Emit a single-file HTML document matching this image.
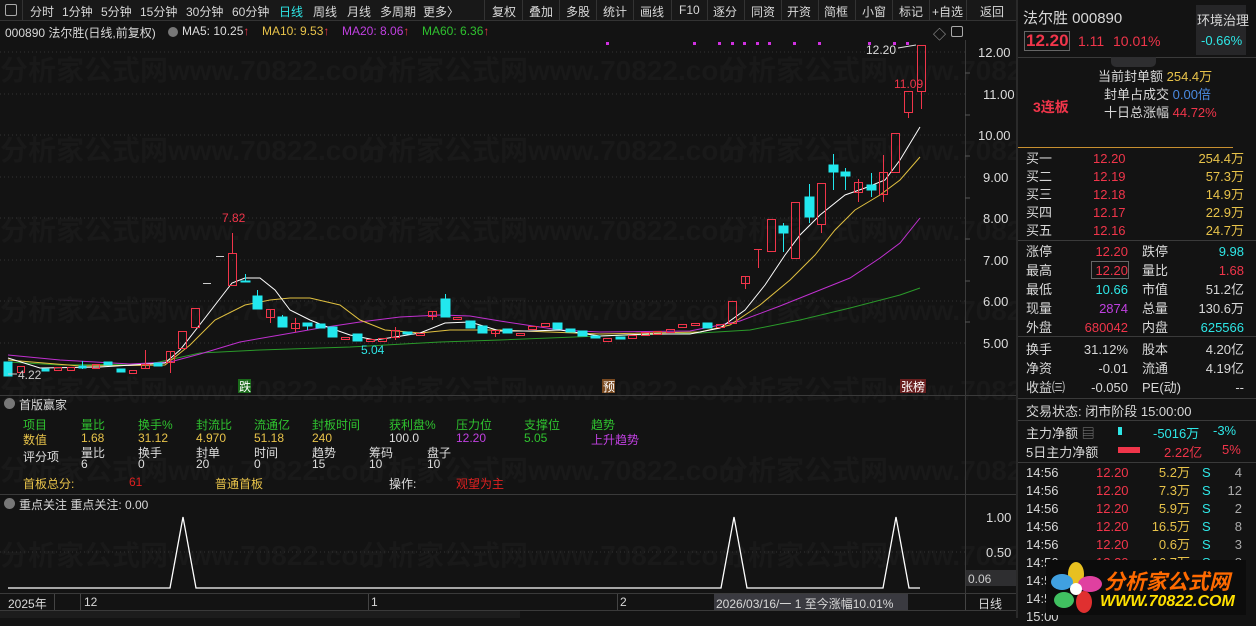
<!DOCTYPE html>
<html><head><meta charset="utf-8"><style>
*{margin:0;padding:0;box-sizing:border-box}
body{width:1256px;height:618px;background:#131313;overflow:hidden;position:relative;font-family:"Liberation Sans","Noto Sans CJK SC",sans-serif;font-size:12px;color:#d8d8d8}
.a{position:absolute;white-space:nowrap}
.tb span{position:absolute;top:3px;font-size:12px;color:#d8d8d8}
.sep{position:absolute;top:0;width:1px;height:20px;background:#333}
.r{color:#f0354a}.y{color:#e8c34a}.c{color:#2ee6e6}.g{color:#2fc22f}.m{color:#c040e0}.w{color:#dedede}.gy{color:#aaa}
.rp{font-size:13px}
.hl{position:absolute;height:1px;background:#3a3a3a}
</style></head><body>
<div class="a" style="left:0;top:0;width:1016px;height:21px;background:#181818;border-bottom:1px solid #333"></div>
<div class="tb">
<span style="left:5px;top:4px;width:12px;height:12px;border:1px solid #aaa;border-radius:2px"></span>
<span style="left:30px">分时</span><span style="left:62px">1分钟</span><span style="left:101px">5分钟</span><span style="left:140px">15分钟</span><span style="left:186px">30分钟</span><span style="left:232px">60分钟</span><span style="left:279px;color:#2ee6e6">日线</span><span style="left:313px">周线</span><span style="left:347px">月线</span><span style="left:380px">多周期</span><span style="left:423px">更多〉</span>
<span style="left:492px">复权</span><span style="left:529px">叠加</span><span style="left:566px">多股</span><span style="left:603px">统计</span><span style="left:640px">画线</span><span style="left:679px">F10</span><span style="left:713px">逐分</span><span style="left:751px">同资</span><span style="left:787px">开资</span><span style="left:824px">简框</span><span style="left:862px">小窗</span><span style="left:899px">标记</span><span style="left:932px">+自选</span><span style="left:980px">返回</span>
</div>
<div class="sep" style="left:22px"></div><div class="sep" style="left:484px"></div><div class="sep" style="left:522px"></div><div class="sep" style="left:559px"></div><div class="sep" style="left:596px"></div><div class="sep" style="left:633px"></div><div class="sep" style="left:671px"></div><div class="sep" style="left:707px"></div><div class="sep" style="left:744px"></div><div class="sep" style="left:781px"></div><div class="sep" style="left:818px"></div><div class="sep" style="left:855px"></div><div class="sep" style="left:892px"></div><div class="sep" style="left:929px"></div><div class="sep" style="left:966px"></div>
<div class="a" style="left:5px;top:24px;font-size:12px">000890 法尔胜(日线,前复权)</div>
<div class="a" style="left:168px;top:27px;width:10px;height:10px;border-radius:50%;background:#777"></div>
<div class="a w" style="left:182px;top:24px">MA5: 10.25<span class="r">↑</span></div>
<div class="a y" style="left:262px;top:24px">MA10: 9.53<span class="r">↑</span></div>
<div class="a m" style="left:342px;top:24px">MA20: 8.06<span class="r">↑</span></div>
<div class="a g" style="left:422px;top:24px">MA60: 6.36<span class="r">↑</span></div>
<div class="a gy" style="left:933px;top:24px;font-size:13px">◇</div>
<div class="a" style="left:951px;top:26px;width:12px;height:11px;border:1px solid #aaa;border-radius:2px"></div>

<svg class="a" style="left:0;top:0" width="1016" height="618">
<g fill="#191919" font-size="28" font-family="Liberation Sans,Noto Sans CJK SC,sans-serif" font-weight="bold">
<text x="0" y="80">分析家公式网www.70822.com</text><text x="360" y="80">分析家公式网www.70822.com</text><text x="720" y="80">分析家公式网www.70822.com</text>
<text x="0" y="160">分析家公式网www.70822.com</text><text x="360" y="160">分析家公式网www.70822.com</text><text x="720" y="160">分析家公式网www.70822.com</text>
<text x="0" y="240">分析家公式网www.70822.com</text><text x="360" y="240">分析家公式网www.70822.com</text><text x="720" y="240">分析家公式网www.70822.com</text>
<text x="0" y="320">分析家公式网www.70822.com</text><text x="360" y="320">分析家公式网www.70822.com</text><text x="720" y="320">分析家公式网www.70822.com</text>
<text x="0" y="400">分析家公式网www.70822.com</text><text x="360" y="400">分析家公式网www.70822.com</text><text x="720" y="400">分析家公式网www.70822.com</text>
<text x="0" y="480">分析家公式网www.70822.com</text><text x="360" y="480">分析家公式网www.70822.com</text><text x="720" y="480">分析家公式网www.70822.com</text>
<text x="0" y="565">分析家公式网www.70822.com</text><text x="360" y="565">分析家公式网www.70822.com</text><text x="720" y="565">分析家公式网www.70822.com</text>
</g>
<g stroke="#333" stroke-dasharray="1,3">
<line x1="0" y1="52" x2="965" y2="52"/><line x1="0" y1="94" x2="965" y2="94"/><line x1="0" y1="135" x2="965" y2="135"/><line x1="0" y1="177" x2="965" y2="177"/><line x1="0" y1="218" x2="965" y2="218"/><line x1="0" y1="260" x2="965" y2="260"/><line x1="0" y1="301" x2="965" y2="301"/><line x1="0" y1="343" x2="965" y2="343"/>
<line x1="0" y1="552" x2="965" y2="552"/>
</g>
<line x1="965.5" y1="40" x2="965.5" y2="593" stroke="#3a3a3a"/>
<line x1="0" y1="395.5" x2="1016" y2="395.5" stroke="#3a3a3a"/>
<line x1="0" y1="494.5" x2="1016" y2="494.5" stroke="#3a3a3a"/>
<line x1="0" y1="593.5" x2="1016" y2="593.5" stroke="#3a3a3a"/>
<line x1="0" y1="610.5" x2="1016" y2="610.5" stroke="#3a3a3a"/>
<g fill="#dcdcdc" font-size="13" font-family="Liberation Sans,sans-serif">
<text x="978" y="57">12.00</text><text x="983" y="99">11.00</text><text x="978" y="140">10.00</text><text x="983" y="182">9.00</text><text x="983" y="223">8.00</text><text x="983" y="265">7.00</text><text x="983" y="306">6.00</text><text x="983" y="348">5.00</text>
<text x="986" y="522">1.00</text><text x="986" y="557">0.50</text>
</g>
<g stroke="#555"><line x1="965" y1="73" x2="970" y2="73"/><line x1="965" y1="115" x2="970" y2="115"/><line x1="965" y1="156" x2="970" y2="156"/><line x1="965" y1="198" x2="970" y2="198"/><line x1="965" y1="239" x2="970" y2="239"/><line x1="965" y1="281" x2="970" y2="281"/><line x1="965" y1="322" x2="970" y2="322"/></g>
<rect x="966" y="570" width="50" height="16" fill="#2e2e30"/><text x="968" y="583" fill="#ccc" font-size="12">0.06</text>
<g fill="#d030e0"><rect x="606" y="42" width="3" height="3"/><rect x="693" y="42" width="3" height="3"/><rect x="718" y="42" width="3" height="3"/><rect x="731" y="42" width="3" height="3"/><rect x="743" y="42" width="3" height="3"/><rect x="756" y="42" width="3" height="3"/><rect x="768" y="42" width="3" height="3"/><rect x="793" y="42" width="3" height="3"/><rect x="818" y="42" width="3" height="3"/><rect x="868" y="42" width="3" height="3"/><rect x="893" y="42" width="3" height="3"/><rect x="906" y="42" width="3" height="3"/></g>
<g fill="none" stroke-width="1">
<polyline stroke="#2a9a2a" points="8,362 60,365 150,364 200,353 260,350 350,347 440,342 500,340 600,336 700,333 750,330 800,320 850,308 900,295 920,288"/>
<polyline stroke="#c030d0" points="8,355 60,360 130,364 170,362 200,354 240,342 280,335 320,328 360,322 400,317 440,315 470,316 500,321 560,330 600,332 690,331 740,321 780,306 820,290 850,278 880,258 900,243 920,218"/>
<polyline stroke="#e0c040" points="8,360 80,366 165,365 190,345 215,320 245,305 270,300 290,298 310,298 340,305 360,320 385,330 420,333 450,330 500,330 600,334 700,332 730,325 760,305 790,280 815,255 835,230 855,210 880,195 900,180 920,157"/>
<polyline stroke="#ffffff" points="8,358 40,368 100,367 165,363 180,350 205,318 232,283 245,278 260,278 275,290 290,310 310,320 330,328 350,335 375,340 395,337 420,333 445,323 470,322 500,331 530,331 560,330 600,336 650,334 690,334 720,328 745,310 765,285 785,255 800,235 820,215 845,195 865,188 885,180 900,160 920,127"/>
</g>
<g fill="none" stroke="#f0354a">
<rect x="17.5" y="366.5" width="7" height="6"/><rect x="54.5" y="367.5" width="7" height="3"/><rect x="67.5" y="367.5" width="7" height="3"/><rect x="92.5" y="364.5" width="7" height="4"/><rect x="129.5" y="370.5" width="7" height="3"/>
<line x1="145.5" y1="350" x2="145.5" y2="368"/><rect x="141.5" y="364.5" width="8" height="4"/>
<line x1="170.5" y1="351" x2="170.5" y2="373"/><rect x="166.5" y="351.5" width="8" height="11"/>
<rect x="178.5" y="331.5" width="8" height="17"/><rect x="191.5" y="308.5" width="8" height="19"/>
<line x1="232.5" y1="233" x2="232.5" y2="253"/><rect x="228.5" y="253.5" width="8" height="32"/>
<line x1="270.5" y1="309" x2="270.5" y2="323"/><rect x="266.5" y="309.5" width="8" height="8"/>
<line x1="295.5" y1="318" x2="295.5" y2="332"/><rect x="291.5" y="323.5" width="8" height="5"/>
<rect x="341.5" y="337.5" width="8" height="2"/><rect x="366.5" y="339.5" width="8" height="2"/><rect x="378.5" y="338.5" width="8" height="3"/>
<line x1="395.5" y1="327" x2="395.5" y2="340"/><rect x="391.5" y="330.5" width="8" height="7"/>
<rect x="416.5" y="333.5" width="8" height="2"/><line x1="432.5" y1="311" x2="432.5" y2="320"/><rect x="428.5" y="311.5" width="8" height="5"/>
<rect x="453.5" y="317.5" width="8" height="2"/><line x1="495.5" y1="330" x2="495.5" y2="337"/><rect x="491.5" y="330.5" width="8" height="3"/>
<rect x="516.5" y="333.5" width="8" height="2"/><rect x="528.5" y="326.5" width="8" height="3"/><rect x="541.5" y="323.5" width="8" height="3"/>
<rect x="603.5" y="338.5" width="8" height="3"/><rect x="628.5" y="335.5" width="8" height="3"/><rect x="641.5" y="332.5" width="8" height="3"/><rect x="653.5" y="331.5" width="8" height="3"/><rect x="666.5" y="329.5" width="8" height="3"/><rect x="678.5" y="324.5" width="8" height="3"/><rect x="691.5" y="323.5" width="8" height="2"/><rect x="716.5" y="324.5" width="8" height="3"/>
<rect x="728.5" y="301.5" width="8" height="22"/>
<line x1="745.5" y1="276" x2="745.5" y2="289"/><rect x="741.5" y="276.5" width="8" height="7"/>
<line x1="758.5" y1="249" x2="758.5" y2="268"/><line x1="754" y1="249.5" x2="762" y2="249.5"/>
<rect x="767.5" y="219.5" width="8" height="32"/>
<rect x="791.5" y="202.5" width="8" height="56"/>
<line x1="821.5" y1="224" x2="821.5" y2="233"/><rect x="817.5" y="183.5" width="8" height="41"/>
<line x1="858.5" y1="179" x2="858.5" y2="202"/><rect x="854.5" y="182.5" width="8" height="10"/>
<line x1="883.5" y1="155" x2="883.5" y2="202"/><rect x="879.5" y="172.5" width="8" height="22"/>
<rect x="891.5" y="133.5" width="8" height="39"/>
<line x1="908.5" y1="112" x2="908.5" y2="118"/><rect x="904.5" y="91.5" width="8" height="21"/>
<line x1="921.5" y1="91" x2="921.5" y2="109"/><rect x="917.5" y="45.5" width="8" height="46"/>
</g>
<g fill="#22e8ee" stroke="#22e8ee">
<rect x="4" y="362" width="8" height="14"/><rect x="42" y="369" width="7" height="2"/><line x1="82.5" y1="361" x2="82.5" y2="369"/><rect x="79" y="366" width="7" height="2"/><rect x="104" y="362" width="8" height="3"/><rect x="117" y="369" width="8" height="3"/><rect x="154" y="363" width="8" height="3"/>
<line x1="245.5" y1="274" x2="245.5" y2="282"/><rect x="241" y="281" width="9" height="1"/>
<line x1="257.5" y1="290" x2="257.5" y2="296"/><rect x="253" y="296" width="9" height="13"/>
<line x1="282.5" y1="315" x2="282.5" y2="317"/><rect x="278" y="317" width="9" height="10"/>
<line x1="307.5" y1="323" x2="307.5" y2="330"/><rect x="303" y="323" width="9" height="3"/>
<rect x="316" y="324" width="9" height="4"/><rect x="328" y="327" width="9" height="10"/><rect x="353" y="334" width="9" height="7"/>
<rect x="403" y="332" width="9" height="2"/>
<line x1="445.5" y1="294" x2="445.5" y2="299"/><rect x="441" y="299" width="9" height="18"/>
<rect x="466" y="321" width="9" height="7"/><rect x="478" y="326" width="9" height="7"/>
<rect x="503" y="329" width="9" height="4"/><rect x="553" y="323" width="9" height="6"/><rect x="566" y="329" width="9" height="3"/><rect x="578" y="331" width="9" height="5"/><rect x="591" y="336" width="9" height="2"/><rect x="616" y="337" width="9" height="2"/><rect x="703" y="323" width="9" height="5"/>
<line x1="783.5" y1="223" x2="783.5" y2="252"/><rect x="779" y="226" width="9" height="7"/>
<line x1="809.5" y1="184" x2="809.5" y2="223"/><rect x="805" y="197" width="9" height="20"/>
<line x1="833.5" y1="154" x2="833.5" y2="190"/><rect x="829" y="165" width="9" height="7"/>
<line x1="845.5" y1="168" x2="845.5" y2="190"/><rect x="841" y="172" width="9" height="4"/>
<line x1="871.5" y1="173" x2="871.5" y2="197"/><rect x="867" y="185" width="9" height="5"/>
</g>
<g stroke="#ccc"><line x1="203" y1="283.5" x2="211" y2="283.5"/><line x1="216" y1="256.5" x2="224" y2="256.5"/></g>
<g font-size="12" font-family="Liberation Sans,sans-serif">
<text x="222" y="222" fill="#f0354a">7.82</text>
<text x="361" y="354" fill="#2ee6e6">5.04</text>
<text x="18" y="379" fill="#ccc">4.22</text><line x1="8" y1="374" x2="17" y2="374" stroke="#ccc"/>
<text x="866" y="54" fill="#ddd">12.20</text><line x1="898" y1="48" x2="916" y2="45" stroke="#ddd"/>
<text x="894" y="88" fill="#f0354a">11.09</text>
</g>
<rect x="238" y="379" width="13" height="14" fill="#1a6a1a"/><text x="239" y="391" fill="#fff" font-size="12">跌</text>
<rect x="602" y="379" width="13" height="14" fill="#7a4a20"/><text x="603" y="391" fill="#fff" font-size="12">预</text>
<rect x="900" y="379" width="26" height="14" fill="#6a2020"/><text x="901" y="391" fill="#fff" font-size="12">张榜</text>
<polyline fill="none" stroke="#fff" stroke-width="1.3" points="8,588 170,588 183,517 196,588 721,588 734,517 747,588 883,588 896,517 909,588 920,588"/>
</svg>

<div class="a" style="left:4px;top:398px;width:11px;height:11px;border-radius:50%;background:#777"></div>
<div class="a" style="left:19px;top:396px;font-size:12px">首版赢家</div>
<div class="a g" style="left:23px;top:416px">项目</div><div class="a g" style="left:81px;top:416px">量比</div><div class="a g" style="left:138px;top:416px">换手%</div><div class="a g" style="left:196px;top:416px">封流比</div><div class="a g" style="left:254px;top:416px">流通亿</div><div class="a g" style="left:312px;top:416px">封板时间</div><div class="a g" style="left:389px;top:416px">获利盘%</div><div class="a g" style="left:456px;top:416px">压力位</div><div class="a g" style="left:524px;top:416px">支撑位</div><div class="a g" style="left:591px;top:416px">趋势</div>
<div class="a y" style="left:23px;top:431px">数值</div><div class="a y" style="left:81px;top:431px">1.68</div><div class="a y" style="left:138px;top:431px">31.12</div><div class="a y" style="left:196px;top:431px">4.970</div><div class="a y" style="left:254px;top:431px">51.18</div><div class="a y" style="left:312px;top:431px">240</div><div class="a w" style="left:389px;top:431px">100.0</div><div class="a m" style="left:456px;top:431px">12.20</div><div class="a g" style="left:524px;top:431px">5.05</div><div class="a m" style="left:591px;top:431px">上升趋势</div>
<div class="a w" style="left:23px;top:448px">评分项</div><div class="a w" style="left:81px;top:448px;line-height:11px">量比<br>6</div><div class="a w" style="left:138px;top:448px;line-height:11px">换手<br>0</div><div class="a w" style="left:196px;top:448px;line-height:11px">封单<br>20</div><div class="a w" style="left:254px;top:448px;line-height:11px">时间<br>0</div><div class="a w" style="left:312px;top:448px;line-height:11px">趋势<br>15</div><div class="a w" style="left:369px;top:448px;line-height:11px">筹码<br>10</div><div class="a w" style="left:427px;top:448px;line-height:11px">盘子<br>10</div>
<div class="a y" style="left:23px;top:475px">首板总分:</div><div class="a" style="left:129px;top:475px;color:#e02020">61</div><div class="a y" style="left:215px;top:475px">普通首板</div><div class="a w" style="left:389px;top:475px">操作:</div><div class="a" style="left:456px;top:475px;color:#e02020">观望为主</div>
<div class="a" style="left:4px;top:498px;width:11px;height:11px;border-radius:50%;background:#777"></div>
<div class="a" style="left:19px;top:496px">重点关注 重点关注: 0.00</div>
<div class="a" style="left:8px;top:595px">2025年</div>
<div class="a" style="left:54px;top:594px;width:1px;height:16px;background:#444"></div>
<div class="a" style="left:84px;top:595px">12</div><div class="a" style="left:80px;top:594px;width:1px;height:16px;background:#444"></div>
<div class="a" style="left:371px;top:595px">1</div><div class="a" style="left:368px;top:594px;width:1px;height:16px;background:#444"></div>
<div class="a" style="left:620px;top:595px">2</div><div class="a" style="left:617px;top:594px;width:1px;height:16px;background:#444"></div>
<div class="a" style="left:714px;top:594px;width:194px;height:16px;background:#3a3a40"></div>
<div class="a" style="left:716px;top:595px">2026/03/16/一 1 至今涨幅10.01%</div>
<div class="a" style="left:965px;top:594px;width:1px;height:16px;background:#444"></div>
<div class="a" style="left:978px;top:595px">日线</div>
<div class="a" style="left:0;top:611px;width:520px;height:7px;background:#1c1c1c"></div>

<div class="a" style="left:1016px;top:0;width:2px;height:618px;background:#2a2a2a"></div>
<div class="a rp" style="left:1023px;top:7px;font-size:15px">法尔胜 000890</div>
<div class="a" style="left:1196px;top:5px;width:50px;height:50px;background:#262628"></div>
<div class="a rp" style="left:1197px;top:10px">环境治理</div>
<div class="a rp c" style="left:1201px;top:33px">-0.66%</div>
<div class="a" style="left:1024px;top:31px;width:46px;height:20px;border:1px solid #666"></div>
<div class="a r" style="left:1026px;top:31px;font-size:17px;font-weight:bold">12.20</div>
<div class="a r" style="left:1078px;top:33px;font-size:14px">1.11</div><div class="a r" style="left:1113px;top:33px;font-size:14px">10.01%</div>
<div class="hl" style="left:1018px;top:57px;width:238px"></div>
<div class="a" style="left:1111px;top:57px;width:45px;height:10px;background:#2e2e30;border-radius:0 0 5px 5px"></div>
<div class="a rp" style="left:1098px;top:66px">当前封单额 <span class="y">254.4万</span></div>
<div class="a rp" style="left:1104px;top:84px">封单占成交 <span style="color:#4a8ae0">0.00倍</span></div>
<div class="a rp" style="left:1104px;top:102px">十日总涨幅 <span class="r">44.72%</span></div>
<div class="a r" style="left:1033px;top:97px;font-size:14px;font-weight:bold">3连板</div>
<div class="a" style="left:1018px;top:147px;width:215px;height:1px;background:#c89030"></div>
<div class="a rp" style="left:1026px;top:150px;line-height:18px">买一<br>买二<br>买三<br>买四<br>买五</div>
<div class="a rp r" style="left:1093px;top:150px;line-height:18px">12.20<br>12.19<br>12.18<br>12.17<br>12.16</div>
<div class="a rp y" style="left:1186px;top:150px;line-height:18px;text-align:right;width:58px">254.4万<br>57.3万<br>14.9万<br>22.9万<br>24.7万</div>
<div class="hl" style="left:1018px;top:240px;width:238px"></div>
<div class="a rp" style="left:1026px;top:242px;line-height:19px">涨停<br>最高<br>最低<br>现量<br>外盘</div>
<div class="a rp" style="left:1070px;top:242px;line-height:19px;text-align:right;width:58px"><span class="r">12.20</span><br><span class="r">12.20</span><br><span class="c">10.66</span><br><span class="m">2874</span><br><span class="r">680042</span></div>
<div class="a" style="left:1091px;top:261px;width:38px;height:18px;border:1px solid #666"></div>
<div class="a rp" style="left:1142px;top:242px;line-height:19px">跌停<br>量比<br>市值<br>总量<br>内盘</div>
<div class="a rp" style="left:1180px;top:242px;line-height:19px;text-align:right;width:64px"><span class="c">9.98</span><br><span class="r">1.68</span><br>51.2亿<br>130.6万<br><span class="c">625566</span></div>
<div class="hl" style="left:1018px;top:336px;width:238px"></div>
<div class="a rp" style="left:1026px;top:340px;line-height:19px">换手<br>净资<br>收益㈢</div>
<div class="a rp" style="left:1070px;top:340px;line-height:19px;text-align:right;width:58px">31.12%<br>-0.01<br>-0.050</div>
<div class="a rp" style="left:1142px;top:340px;line-height:19px">股本<br>流通<br>PE(动)</div>
<div class="a rp" style="left:1180px;top:340px;line-height:19px;text-align:right;width:64px">4.20亿<br>4.19亿<br>--</div>
<div class="hl" style="left:1018px;top:398px;width:238px"></div>
<div class="a rp" style="left:1026px;top:401px">交易状态: 闭市阶段 15:00:00</div>
<div class="hl" style="left:1018px;top:420px;width:238px"></div>
<div class="a rp" style="left:1026px;top:423px">主力净额 <span style="color:#888">▤</span></div>
<div class="a" style="left:1118px;top:427px;width:4px;height:8px;background:#2ee6e6"></div>
<div class="a rp c" style="left:1153px;top:423px">-5016万</div><div class="a rp c" style="left:1213px;top:423px">-3%</div>
<div class="a rp" style="left:1026px;top:442px">5日主力净额</div>
<div class="a" style="left:1118px;top:447px;width:22px;height:6px;background:#f0354a"></div>
<div class="a rp r" style="left:1164px;top:442px">2.22亿</div><div class="a rp r" style="left:1222px;top:442px">5%</div>
<div class="hl" style="left:1018px;top:462px;width:238px"></div>
<div class="a rp" style="left:1026px;top:464px;line-height:18px">14:56<br>14:56<br>14:56<br>14:56<br>14:56<br>14:56<br>14:56<br>14:56<br>15:00</div>
<div class="a rp r" style="left:1096px;top:464px;line-height:18px">12.20<br>12.20<br>12.20<br>12.20<br>12.20<br>12.20<br>12.20<br>12.20</div>
<div class="a rp y" style="left:1146px;top:464px;line-height:18px;text-align:right;width:44px">5.2万<br>7.3万<br>5.9万<br>16.5万<br>0.6万<br>16.7万</div>
<div class="a rp c" style="left:1202px;top:464px;line-height:18px">S<br>S<br>S<br>S<br>S<br>S</div>
<div class="a rp gy" style="left:1218px;top:464px;line-height:18px;text-align:right;width:24px">4<br>12<br>2<br>8<br>3<br>8</div>
<div class="a" style="left:1046px;top:560px;width:200px;height:55px;background:#0c0c0c"></div>
<svg class="a" style="left:1048px;top:560px" width="56" height="56">
<ellipse cx="28" cy="14" rx="8" ry="12" fill="#e8c020"/><ellipse cx="42" cy="24" rx="12" ry="8" fill="#e040a0"/><ellipse cx="36" cy="42" rx="8" ry="11" fill="#e03030"/><ellipse cx="16" cy="40" rx="10" ry="8" fill="#40c060"/><ellipse cx="14" cy="22" rx="11" ry="8" fill="#40a0e0"/><circle cx="28" cy="29" r="6" fill="#fff"/>
</svg>
<div class="a" style="left:1104px;top:566px;font-size:21px;font-weight:bold;font-style:italic;color:#ff6a00">分析家公式网</div>
<div class="a" style="left:1100px;top:593px;font-size:16px;font-weight:bold;font-style:italic;color:#ffe000">WWW.70822.COM</div>
</body></html>
